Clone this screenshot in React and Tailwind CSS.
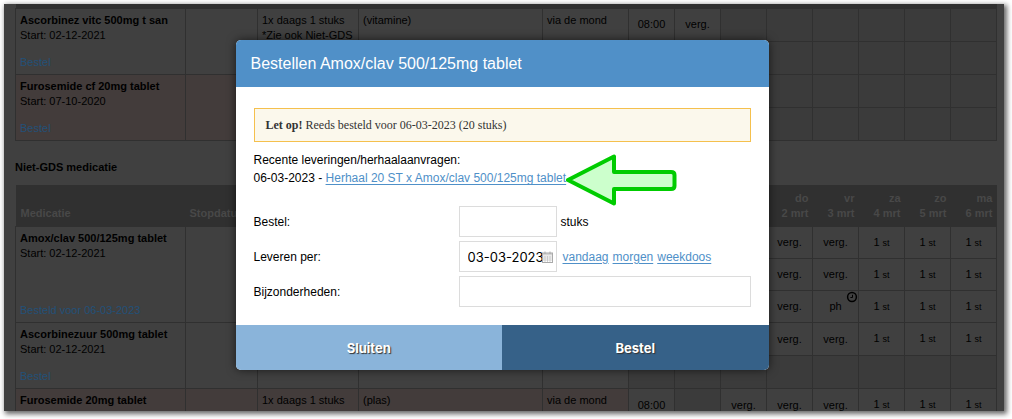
import React, { useState } from "react";

const gdsRows = [
  {
    name: "Ascorbinez vitc 500mg t san",
    start: "02-12-2021",
    order: "Bestel",
    dosage: ["1x daags 1 stuks", "*Zie ook Niet-GDS"],
    remark: "(vitamine)",
    route: "via de mond",
    times: [
      ["08:00", "verg.", "", "", "", "", "", ""],
      ["", "", "", "", "", "", "", ""],
    ],
  },
  {
    name: "Furosemide cf 20mg tablet",
    start: "07-10-2020",
    order: "Bestel",
    pink: true,
    times: [
      ["", "", "", "", "", "", "", ""],
      ["", "", "", "", "", "", "", ""],
    ],
  },
];

const otherRows = [
  {
    name: "Amox/clav 500/125mg tablet",
    start: "02-12-2021",
    order: "Besteld voor 06-03-2023",
    times: [
      ["", "", "", "verg.", "verg.", "1 st", "1 st", "1 st"],
      ["", "", "", "verg.", "verg.", "1 st", "1 st", "1 st"],
      ["", "", "", "verg.", "ph", "1 st", "1 st", "1 st"],
    ],
  },
  {
    name: "Ascorbinezuur 500mg tablet",
    start: "02-12-2021",
    order: "Bestel",
    times: [
      ["", "", "", "verg.", "verg.", "1 st", "1 st", "1 st"],
      ["", "", "", "", "", "", "", ""],
    ],
  },
  {
    name: "Furosemide 20mg tablet",
    pink: true,
    dosage: ["1x daags 1 stuks"],
    remark: "(plas)",
    route: "via de mond",
    times: [["08:00", "", "verg.", "verg.", "verg.", "1 st", "1 st", "1 st"]],
  },
];

const days = [
  ["", ""],
  ["", ""],
  ["", ""],
  ["do", "2 mrt"],
  ["vr", "3 mrt"],
  ["za", "4 mrt"],
  ["zo", "5 mrt"],
  ["ma", "6 mrt"],
];

const Columns = () => (
  <colgroup>
    <col className="w-[170px]" />
    <col className="w-[72px]" />
    <col className="w-[101px]" />
    <col />
    <col className="w-[86px]" />
    {days.map((d, i) => (
      <col key={i} className="w-[46px]" />
    ))}
  </colgroup>
);

const ClockIcon = () => (
  <svg viewBox="0 0 12 12" className="absolute right-0 top-0 w-3 h-3" fill="none" stroke="#000">
    <circle cx="6" cy="6" r="4.4" strokeWidth="1.5" />
    <path d="M6.5 3.8V6.5H4.4" strokeWidth="1" />
  </svg>
);

const DayCell = ({ value }) => {
  if (value.endsWith(" st")) {
    return (
      <span>
        1 <span className="text-[9px]">st</span>
      </span>
    );
  }
  return <span>{value}</span>;
};

const MedicineRows = ({ med, subHeight }) => {
  const info = "border border-[#303030] px-1 pt-1 align-top " + (med.pink ? "bg-[#433c3b]" : "bg-[#404040]");

  return med.times.map((cells, i) => (
    <tr key={i} className={subHeight}>
      {i === 0 && (
        <>
          <td rowSpan={med.times.length} className={info + " h-px"}>
            <div className="flex h-full flex-col">
              <strong>{med.name}</strong>
              {med.start && <span>Start: {med.start}</span>}
              {med.order && <a href="#" className="mt-auto mb-1 text-[#235078]">{med.order}</a>}
            </div>
          </td>
          <td rowSpan={med.times.length} className={info}></td>
          <td rowSpan={med.times.length} className={info}>
            {med.dosage?.map((line) => (
              <div key={line} className="whitespace-nowrap">{line}</div>
            ))}
          </td>
          <td rowSpan={med.times.length} className={info}>{med.remark}</td>
          <td rowSpan={med.times.length} className={info}>{med.route}</td>
        </>
      )}
      {cells.map((value, j) => (
        <td
          key={j}
          className={
            "relative border border-[#303030] p-0 text-center align-middle " +
            (value ? "bg-[#404040]" : "bg-[#3b3b3b]")
          }
        >
          <DayCell value={value} />
          {value === "ph" && <ClockIcon />}
        </td>
      ))}
    </tr>
  ));
};

const OrderDialog = () => {
  const [amount, setAmount] = useState("");
  const [date, setDate] = useState("03-03-2023");
  const [remarks, setRemarks] = useState("");

  const field = "h-[31px] border border-[#dcdcdc] bg-white px-2 outline-none";
  const link = "text-[#4f90c8] underline underline-offset-2";

  return (
    <div
      role="dialog"
      aria-labelledby="order-title"
      className="relative w-[533px] overflow-hidden rounded-[5px] bg-white text-[12px] leading-[18px] text-black shadow-[0_0_10px_rgba(0,0,0,0.6)]"
    >
      <h1 id="order-title" className="bg-[#5090c8] px-[15px] py-3 text-[16px] leading-[23px] text-white">
        Bestellen Amox/clav 500/125mg tablet
      </h1>

      <div className="px-[18px] pt-[21px] pb-[18px]">
        <p className="border border-[#f5c04d] bg-[#fbf8ec] px-[11px] py-[7px] font-['Liberation_Serif',serif] text-[#333]">
          <b>Let op!</b> Reeds besteld voor 06-03-2023 (20 stuks)
        </p>

        <div className="mt-[9px]">
          <p>Recente leveringen/herhaalaanvragen:</p>
          <p>
            06-03-2023 - <a href="#" className={link}>Herhaal 20 ST x Amox/clav 500/125mg tablet</a>
          </p>
        </div>

        <form id="order-form" className="mt-[19px] flex flex-col gap-1" onSubmit={(e) => e.preventDefault()}>
          <div className="flex items-center">
            <label htmlFor="amount" className="w-[205px]">Bestel:</label>
            <input
              id="amount"
              value={amount}
              onChange={(e) => setAmount(e.target.value)}
              className={field + " w-[98px]"}
            />
            <span className="ml-1">stuks</span>
          </div>
          <div className="flex items-center">
            <label htmlFor="date" className="w-[205px]">Leveren per:</label>
            <div className="relative w-[98px]">
              <input
                id="date"
                value={date}
                onChange={(e) => setDate(e.target.value)}
                className={field + " block w-full font-['Inter',sans-serif] text-[13px]"}
              />
              {/* calendar */}
              <svg viewBox="0 0 11 12" className="absolute right-1 top-[10px] h-3 w-[11px]" fill="none" stroke="#aaa">
                <rect x="0.5" y="2" width="10" height="9.5" />
                <path d="M0.5 3H10.5M3 0.5V3M8 0.5V3" />
                <path d="M3 5V11M5.5 5V11M8 5V11M1 5H10M1 7H10M1 9H10" strokeWidth="0.5" />
              </svg>
            </div>
            <div className="ml-[6px] flex gap-1">
              <a href="#" className={link}>vandaag</a>
              <a href="#" className={link}>morgen</a>
              <a href="#" className={link}>weekdoos</a>
            </div>
          </div>
          <div className="flex items-center">
            <label htmlFor="remarks" className="w-[205px]">Bijzonderheden:</label>
            <input
              id="remarks"
              value={remarks}
              onChange={(e) => setRemarks(e.target.value)}
              className={field + " min-w-0 flex-1"}
            />
          </div>
        </form>
      </div>

      <div className="grid grid-cols-2 font-['Inter',sans-serif] text-[13px] font-bold text-white [text-shadow:1px_1px_1px_#333]">
        <button type="button" className="h-[45px] bg-[#8ab4da] [text-shadow:inherit]">Sluiten</button>
        <button type="submit" form="order-form" className="h-[45px] bg-[#366188] [text-shadow:inherit]">Bestel</button>
      </div>

      {/* arrow pointing at the repeat link */}
      <svg
        viewBox="0 0 112 52"
        className="absolute left-[329px] top-[114px] h-[52px] w-[112px]"
        fill="#ccffcc"
        stroke="#00cc00"
        strokeWidth="4"
        strokeLinejoin="round"
      >
        <path d="M3 26L49 2.500V18H106Q109.500 18 109.500 21V32Q109.500 35 106 35H49V49.500Z" />
      </svg>
    </div>
  );
};

const App = () => {
  return (
    <div className="h-screen overflow-hidden bg-white pt-1 pr-2 pb-2 pl-1 font-['Liberation_Sans',Arial,sans-serif]">
      <div className="relative h-full overflow-hidden bg-[#404040] pl-[11px] pr-[7px] text-[11px] leading-[15px] text-black shadow-[2px_2px_5px_1px_rgba(0,0,0,0.6)]">
        <table className="w-full table-fixed border-collapse">
          <Columns />
          <thead>
            <tr className="h-1">
              <th colSpan={13} className="bg-[#303030] p-0"></th>
            </tr>
          </thead>
          <tbody>
            {gdsRows.map((med) => (
              <MedicineRows key={med.name} med={med} subHeight="h-[33px]" />
            ))}
          </tbody>
        </table>

        <h2 className="flex h-11 items-center pt-[10px] text-[11px] font-bold">Niet-GDS medicatie</h2>

        <table className="w-full table-fixed border-collapse">
          <Columns />
          <thead>
            <tr className="h-[42px] bg-[#303030] align-bottom text-[#484848]">
              <th className="px-[5px] pb-[5px] text-left">Medicatie</th>
              <th className="px-1 pb-[5px] text-left">Stopdatum</th>
              <th></th>
              <th></th>
              <th></th>
              {days.map(([day, label], i) => (
                <th key={i} className="px-1 pb-[5px] text-right whitespace-nowrap">
                  {day}
                  <br />
                  {label}
                </th>
              ))}
            </tr>
          </thead>
          <tbody>
            {otherRows.map((med) => (
              <MedicineRows
                key={med.name}
                med={med}
                subHeight={med.times.length > 2 ? "h-8" : "h-[33px]"}
              />
            ))}
          </tbody>
        </table>

        <div className="absolute inset-0 flex items-start justify-center pt-9 pr-1">
          <OrderDialog />
        </div>
      </div>
    </div>
  );
};

export default App;
